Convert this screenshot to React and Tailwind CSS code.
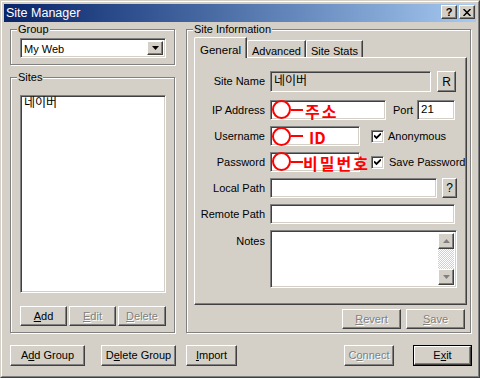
import React from "react";

const raised =
  "border border-t-white border-l-white border-r-[#404040] border-b-[#404040] shadow-[inset_-1px_-1px_0_#808080] bg-[#d4d0c8]";
const sunken =
  "border border-t-[#808080] border-l-[#808080] border-r-white border-b-white shadow-[inset_1px_1px_0_#404040,inset_-1px_-1px_0_#d4d0c8]";
const groupBox =
  "relative border border-[#808080] shadow-[inset_1px_1px_0_white,1px_1px_0_white]";
const dis = "text-[#808080] [text-shadow:1px_1px_0_white]";

function GroupBox({ label, className, children }) {
  return (
    <div className={groupBox + " " + className}>
      <span className="absolute -top-[7px] left-[6px] px-[1px] bg-[#d4d0c8] leading-[13px]">
        {label}
      </span>
      {children}
    </div>
  );
}

function Btn({ className, children, disabled }) {
  return (
    <div
      className={
        raised +
        " flex items-center justify-center leading-none " +
        (disabled ? dis + " " : "") +
        className
      }
    >
      <span>{children}</span>
    </div>
  );
}

function Check() {
  return (
    <div className={sunken + " w-[13px] h-[13px] bg-white flex items-center justify-center"}>
      <svg width="7" height="7" viewBox="0 0 7 7">
        <path d="M0 2.5 L2.5 5 L7 0.5" stroke="black" strokeWidth="1.8" fill="none" />
      </svg>
    </div>
  );
}

function Row({ label, className, children, top }) {
  return (
    <div className={"flex " + (top ? "items-start " : "items-center ") + className}>
      <div className={"w-[70px] text-right " + (top ? "pt-[3px]" : "")}>{label}</div>
      <div className="ml-[5px] flex items-center">{children}</div>
    </div>
  );
}

function Annot({ text, textLeft, top = -1, tight }) {
  return (
    <div className="absolute inset-0 pointer-events-none">
      <div
        className="absolute left-[1px] w-[19px] h-[19px] rounded-full border-2 border-[#ff0000]"
        style={{ top }}
      />
      <div className="absolute left-[20px] top-[8px] w-[12px] h-[2px] bg-[#ff0000]" />
      <span
        className={
          "absolute top-[0px] text-[#ff0000] font-bold text-[16px] leading-[20px] whitespace-nowrap font-['Noto_Sans_CJK_KR',sans-serif] " +
          (tight ? "tracking-[0px]" : "tracking-[2px]")
        }
        style={{ left: textLeft }}
      >
        {text}
      </span>
    </div>
  );
}

function Arrow({ up }) {
  return (
    <div className={raised + " w-[16px] h-[16px] flex items-center justify-center"}>
      <svg width="7" height="4" viewBox="0 0 7 4">
        <path
          d={up ? "M0 4 L3.5 0 L7 4 Z" : "M0 0 L3.5 4 L7 0 Z"}
          fill="#808080"
        />
      </svg>
    </div>
  );
}

export default function App() {
  return (
    <div className="w-[480px] h-[378px] overflow-hidden bg-[#d4d0c8] border border-t-[#d4d0c8] border-l-[#d4d0c8] border-r-[#404040] border-b-[#404040] font-['Liberation_Sans','Noto_Sans_CJK_KR',sans-serif] text-[11px] text-black">
      <div className="h-full border border-t-white border-l-white border-r-[#808080] border-b-[#808080] p-[2px] flex flex-col">
        {/* Title bar */}
        <div className="h-[18px] flex items-start bg-linear-to-r from-[#0a246a] to-[#a6caf0] pl-[2px] pr-[1px]">
          <span className="text-white text-[12.5px] leading-[18px]">Site Manager</span>
          <div className="ml-auto mt-[1px] flex gap-[2px]">
            <div className={raised + " w-[16px] h-[14px] flex items-center justify-center font-bold text-[11px] leading-none"}>
              ?
            </div>
            <div className={raised + " w-[16px] h-[14px] flex items-center justify-center"}>
              <svg width="8" height="7" viewBox="0 0 8 7">
                <path d="M0.5 0 L7.5 7 M7.5 0 L0.5 7" stroke="black" strokeWidth="1.5" />
              </svg>
            </div>
          </div>
        </div>

        {/* Main */}
        <div className="flex pl-[6px] mt-[7px]">
          {/* Left column */}
          <div className="w-[165px] flex flex-col">
            <GroupBox label="Group" className="h-[36px] pt-[8px] pl-[9px]">
              <div className={sunken + " w-[146px] h-[20px] bg-white flex items-stretch py-[2px] pr-[2px]"}>
                <span className="pl-[3px] leading-[16px] text-[11px]">My Web</span>
                <div className={raised + " ml-auto w-[16px] flex items-center justify-center"}>
                  <svg width="7" height="4" viewBox="0 0 7 4">
                    <path d="M0 0 L3.5 4 L7 0 Z" fill="black" />
                  </svg>
                </div>
              </div>
            </GroupBox>
            <GroupBox label="Sites" className="mt-[12px] h-[256px] pt-[17px] pl-[9px]">
              <div className={sunken + " w-[146px] h-[198px] bg-white pl-[3px] pt-[1px] text-[12px] leading-[13px]"}>
                네이버
              </div>
              <div className="flex gap-[2px] mt-[13px]">
                <Btn className="w-[47px] h-[20px]">
                  <u>A</u>dd
                </Btn>
                <Btn className="w-[47px] h-[20px]" disabled>
                  <u>E</u>dit
                </Btn>
                <Btn className="w-[48px] h-[20px]" disabled>
                  <u>D</u>elete
                </Btn>
              </div>
            </GroupBox>
          </div>

          {/* Right column */}
          <div className="ml-[11px] w-[285px]">
            <GroupBox label="Site Information" className="h-[304px] pt-[7px] pl-[7px]">
              {/* Tabs */}
              <div className="flex items-end h-[20px]">
                <div className="relative z-10 -mb-[1px] h-[21px] w-[53px] bg-[#d4d0c8] border-t border-l border-r border-t-white border-l-white border-r-[#404040] shadow-[inset_-1px_0_0_#808080] rounded-tl-[2px] flex justify-center pt-[4px] text-[11.5px]">
                  General
                </div>
                <div className="h-[17px] w-[59px] bg-[#d4d0c8] border-t border-l border-r border-t-white border-l-white border-r-[#404040] shadow-[inset_-1px_0_0_#808080] rounded-tl-[2px] flex justify-center pt-[2px]">
                  Advanced
                </div>
                <div className="h-[17px] w-[57px] bg-[#d4d0c8] border-t border-l border-r border-t-white border-l-white border-r-[#404040] shadow-[inset_-1px_0_0_#808080] rounded-tl-[2px] flex justify-center pt-[2px]">
                  Site Stats
                </div>
              </div>
              {/* Panel */}
              <div className="w-[273px] h-[248px] border border-t-white border-l-white border-r-[#404040] border-b-[#404040] shadow-[inset_-1px_-1px_0_#808080] pt-[13px]">
                <Row label="Site Name" className="">
                  <div className={sunken + " w-[161px] h-[21px] bg-[#d4d0c8] pl-[3px] pt-[2px] text-[12px] leading-[14px]"}>
                    네이버
                  </div>
                  <Btn className="ml-[6px] w-[19px] h-[21px] text-[12px]">R</Btn>
                </Row>
                <Row label="IP Address" className="mt-[8px]">
                  <div className={sunken + " relative w-[116px] h-[20px] bg-white"}>
                    <Annot text="주소" textLeft={34} />
                  </div>
                  <span className="ml-[7px] w-[24px]">Port</span>
                  <div className={sunken + " w-[38px] h-[20px] bg-white pl-[3px] leading-[17px] text-[11.5px]"}>21</div>
                </Row>
                <Row label="Username" className="mt-[6px]">
                  <div className={sunken + " relative w-[90px] h-[20px] bg-white"}>
                    <Annot text="ID" textLeft={38} top={0} tight />
                  </div>
                  <div className="ml-[11px]">
                    <Check />
                  </div>
                  <span className="ml-[4px]">Anonymous</span>
                </Row>
                <Row label="Password" className="mt-[6px]">
                  <div className={sunken + " relative w-[90px] h-[20px] bg-white"}>
                    <Annot text="비밀번호" textLeft={32} top={-1} />
                  </div>
                  <div className="ml-[11px]">
                    <Check />
                  </div>
                  <span className="ml-[5px]">Save Password</span>
                </Row>
                <Row label="Local Path" className="mt-[6px]">
                  <div className={sunken + " w-[167px] h-[20px] bg-white"} />
                  <Btn className="ml-[5px] w-[15px] h-[20px] text-[12px]">?</Btn>
                </Row>
                <Row label="Remote Path" className="mt-[6px]">
                  <div className={sunken + " w-[185px] h-[20px] bg-white"} />
                </Row>
                <Row label="Notes" className="mt-[6px]" top>
                  <div className={sunken + " w-[187px] h-[58px] bg-white flex justify-end p-[2px]"}>
                    <div className="w-[16px] flex flex-col">
                      <Arrow up />
                      <div className="flex-1 [background:repeating-conic-gradient(#ffffff_0%_25%,#d4d0c8_0%_50%)_0_0/2px_2px]" />
                      <Arrow />
                    </div>
                  </div>
                </Row>
              </div>
              <div className="flex mt-[4px] pl-[148px] gap-[5px]">
                <Btn className="w-[59px] h-[20px]" disabled>
                  <u>R</u>evert
                </Btn>
                <Btn className="w-[59px] h-[20px]" disabled>
                  <u>S</u>ave
                </Btn>
              </div>
            </GroupBox>
          </div>
        </div>

        {/* Bottom buttons */}
        <div className="flex mt-[12px] pl-[6px]">
          <Btn className="w-[75px] h-[21px]">
            A<u>d</u>d Group
          </Btn>
          <Btn className="ml-[16px] w-[75px] h-[21px]">
            D<u>e</u>lete Group
          </Btn>
          <Btn className="ml-[10px] w-[51px] h-[21px]">
            <u>I</u>mport
          </Btn>
          <Btn className="ml-[107px] w-[50px] h-[21px]" disabled>
            C<u>o</u>nnect
          </Btn>
          <div className="ml-[19px] w-[59px] h-[21px] border border-black">
            <Btn className="w-full h-full">
              E<u>x</u>it
            </Btn>
          </div>
        </div>
      </div>
    </div>
  );
}
